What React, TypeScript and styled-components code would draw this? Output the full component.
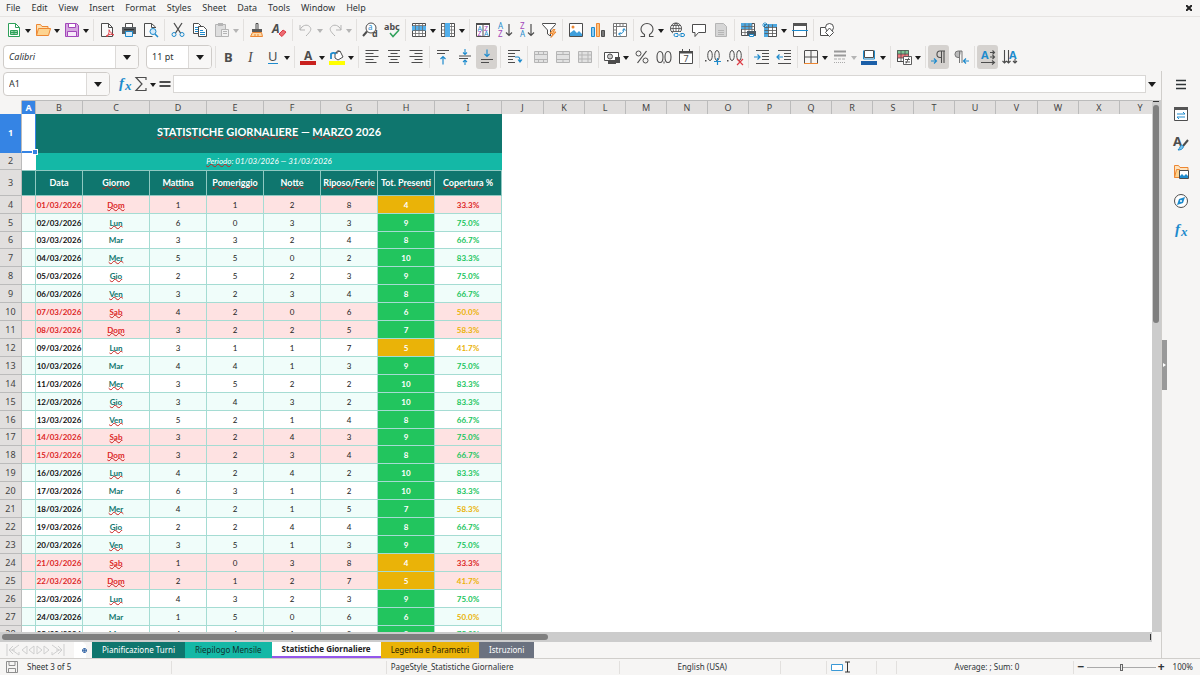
import React from "react";
import styled, { createGlobalStyle, css } from "styled-components";

const ink = "#4d4d4d";
const blue = "#1e8bcd";
const ui = `"Noto Sans", "Open Sans", sans-serif`;
const cellFont = `Lato, "Open Sans", sans-serif`;

const GlobalStyle = createGlobalStyle`
  * { box-sizing: border-box; }
  html, body, #root { height: 100%; }
  body { margin: 0; background: #f6f5f4; color: #2e3436; font: 9px/12px ${ui}; overflow: hidden; }
  button, input { font: inherit; color: inherit; }
  button { border: 0; background: none; padding: 0; }
`;

/* ---------- icons ---------- */

const L = ({ d, c = ink, f = "none", w = 1 }: { d: string; c?: string; f?: string; w?: number }) => (
  <path d={d} stroke={c} fill={f} strokeWidth={w} />
);
const T = ({ x, y, s = 8, c = ink, b, i, serif, children }: {
  x: number; y: number; s?: number; c?: string; b?: boolean; i?: boolean; serif?: boolean; children: string;
}) => (
  <text x={x} y={y} fontSize={s} fill={c} fontWeight={b ? 700 : 400} fontStyle={i ? "italic" : "normal"}
    fontFamily={serif ? "Liberation Serif, serif" : "Noto Sans, sans-serif"}>{children}</text>
);
const grey = "#b5b5b5";
const purple = "#a347ba";
const orange = "#ed8733";

const icons: Record<string, React.ReactNode> = {
  new: <><L d="M2.5 1.5h7l4 4v9h-11z" c="#2fa05a" f="#fff" /><L d="M9.5 1.5v4h4" c="#2fa05a" /><L d="M4.5 8.5h7v4h-7zM4.5 10.5h7M8 8.5v4" c="#2fa05a" f="#9ad7ae" /></>,
  open: <><L d="M1.5 13.5v-11h4l1.5 2h6v2.5" c={orange} f="#fbe0b0" /><L d="M1.5 13.5l2-7h12l-2 7z" c={orange} f="#fdd491" /></>,
  save: <><L d="M1.5 1.5h11l2 2v11h-13z" c={purple} f="#d6a7e0" /><L d="M4.5 1.5h7v4h-7z" c={purple} f="#fff" /><L d="M3.5 9.5h9v5h-9z" c={purple} f="#f6e9f9" /></>,
  pdf: <><L d="M2.5 1.5h7l4 4v9h-11z" f="#fafafa" /><L d="M9.5 1.5v4h4" /><L d="M8 15c2-3 2.5-6 2-7.500M7 14c3-2 6-2 8-1M10 8c1 2 3 4 5 5" c="#e0434b" /></>,
  print: <><L d="M4.5 5v-3.500h7V5" f="#fff" /><path d="M1 5h14v7H1z" fill="#5a5f63" /><L d="M4.5 9.5h7v5h-7z" c={blue} f="#dceefa" /><path d="M3 7h10v1H3z" fill="#2f3234" /></>,
  preview: <><L d="M12.5 6v-1l-4-3.500h-7v13h8" f="#fafafa" /><L d="M8.5 1.5v4h4" /><circle cx="10" cy="9.5" r="3" stroke={blue} fill="#d4eafa" /><L d="M12 12l3 3" c={blue} w={1.5} /></>,
  cut: <><L d="M4 1l6.500 10M12 1L5.500 11" w={1.3} /><circle cx="4" cy="12.5" r="2" stroke={blue} fill="none" /><circle cx="12" cy="12.5" r="2" stroke={blue} fill="none" /></>,
  copy: <><L d="M1.5 1.5h5l3 3v7h-8z" f="#fff" /><L d="M3 5.5h3M3 7.5h3M3 9.5h3" c={blue} /><L d="M6.5 4.5h5l3 3v7h-8z" f="#fff" /><L d="M8 8.5h3M8 10.5h5M8 12.5h5" c={blue} /></>,
  paste: <><L d="M1.5 2.5h10v12h-10z" c={grey} f="#dedede" /><path d="M4 1h5v3H4z" fill={grey} /><L d="M7.5 7.5h7v7h-7zM9 9.5h4M9 11.5h4" c={grey} f="#f2f2f2" /></>,
  clone: <><L d="M7 1.5h2v6H7z" f="#eee" /><path d="M3 7h10v3H3z" fill="#5a5a5a" /><L d="M3.5 10.5h9l1 4h-12zM6 12v2M9 12v2" c={orange} f="#fcd9a8" /></>,
  clear: <><T x={1} y={11} s={12} i b>A</T><L d="M8 12l4-4 3 2-4 4.500z" c="#dd3b45" f="#ec6b72" /></>,
  undo: <L d="M2 3v5h5M2 8c2-5 7-6 9.500-3.500S13 9 8 14" c={grey} />,
  redo: <L d="M14 3v5H9M14 8c-2-5-7-6-9.500-3.500S3 9 8 14" c={grey} />,
  find: <><circle cx="9" cy="6" r="5" stroke={ink} fill="#fff" /><L d="M5 9.5l-4 4.500" w={2} /><T x={6} y={8} s={8} c={blue}>a</T><T x={10} y={15} s={9} b>d</T></>,
  spell: <><T x={0} y={8} s={9} b>abc</T><L d="M6 11l3 3.500 6-6.500" c="#2fa05a" w={1.5} /></>,
  row: <><L d="M1.5 1.5h13v13h-13z" f="#fff" /><path d="M1 4h14v5H1z" fill="#53b0ec" /><L d="M1.5 3.5h13M1.5 8.5h13M1.5 11.5h13M4.5 1.5v13M8 1.5v13M11.5 1.5v13" c="#6a6a6a" w={0.8} /></>,
  col: <><L d="M1.5 1.5h13v13h-13z" f="#fff" /><L d="M1.5 4.5h13M1.5 8h13M1.5 11.5h13M4.5 1.5v13M11.5 1.5v13" c="#6a6a6a" w={0.8} /><path d="M5 1h5v14H5z" fill="#53b0ec" /></>,
  sort: <><L d="M1.5 1.5h13v13h-13zM8 2v13" f="#fff" /><path d="M1 1h14v2H1z" fill={ink} /><T x={2.5} y={8.5} s={7} c={blue}>A</T><T x={2.5} y={14} s={7} c={purple}>Z</T><T x={9} y={8.5} s={7} c={purple}>Z</T><T x={9} y={14} s={7} c={blue}>A</T></>,
  asc: <><T x={1} y={7} s={8} c={blue}>A</T><T x={1} y={15} s={8} c={purple}>Z</T><L d="M12 2v11.500M9 10.5l3 3 3-3" w={1.2} /></>,
  desc: <><T x={1} y={7} s={8} c={purple}>Z</T><T x={1} y={15} s={8} c={blue}>A</T><L d="M12 2v11.500M9 10.5l3 3 3-3" w={1.2} /></>,
  filter: <><L d="M1.5 1.5h13v1L9.5 8v6l-3-2V8l-5-5.500z" f="#fff" /><L d="M12 7.5l-3 4h3l-2 4 5-5.500h-3l2-2.500z" c={orange} f="#fbc27f" /></>,
  image: <><L d="M1.5 1.5h13v13h-13z" f="#fff" /><path d="M2 14v-3l4-3 3 3 2-2 3 3v2z" fill="#3f9fdc" /><circle cx="5" cy="5" r="1.5" fill={orange} /></>,
  chart: <><L d="M1.5 5.5h3v9h-3z" c={blue} f="#8ccbf2" /><L d="M6.5 1.5h3v13h-3z" c={orange} f="#fbc27f" /><L d="M11.5 8.5h3v6h-3z" c={ink} f="#777" /></>,
  pivot: <><L d="M1.5 1.5h13v13h-13zM1.5 4.5h13M4.5 1.5v13M8 1.5v3M11 1.5v3M1.5 8h3M1.5 11h3" f="#fff" c="#777" /><L d="M7 12c3 0 5-2 5-5M10.5 8.5L12 6.5l1.500 2M8.5 10.5L6.5 12l2 1.500" c={blue} /></>,
  omega: <L d="M1.5 14.5h4v-2C3 11 2 9 2 7a6 5.500 0 0 1 12 0c0 2-1 4-3.500 5.500v2h4" w={1.1} />,
  link: <><circle cx="7" cy="6.5" r="5.5" stroke={ink} fill="#fff" /><L d="M1.5 6.5h11M7 1v11M3 3.5h8M3 9.5h8M7 1c-4 3-4 8 0 11M7 1c4 3 4 8 0 11" w={0.8} /><path d="M4 10h12v6H4z" fill="#f6f5f4" /><L d="M9 11.5H6.500a1.500 1.500 0 0 0 0 3H9M11.5 11.5H14a1.500 1.500 0 0 1 0 3h-2.500M8 13h5" c={blue} /></>,
  comment: <L d="M1.5 2.5h13v8h-7l-3.500 4v-4H1.500z" f="#fff" />,
  header: <><L d="M2.5 1.5h8l3 3v10h-11z" c={grey} f="#d6d6d6" /><L d="M5 8.5h6M5 10.5h6M5 12.5h6" c={grey} /></>,
  area: <><L d="M1.5 1.5h13v12h-13z" f="#fff" /><path d="M1 1h11v6H1z" fill="#4ea8e0" /><L d="M1.5 4.5h13M1.5 7.5h13M1.5 10.5h13M5 1.5v12M9 1.5v12M12 1.5v12" c="#666" w={0.8} /><path d="M7 9h9v5H7z" fill="#4a5a66" /><L d="M9.5 12.5h4v2h-4z" c={blue} f="#fff" /></>,
  freeze: <><L d="M2.5 2.5h12v12h-12z" f="#fff" /><path d="M5 2h10v3H5zM2 5h4v10H2z" fill="#4ea8e0" /><L d="M2.5 5.5h12M2.5 8.5h12M2.5 11.5h12M6.5 2.5v12M10.5 2.5v12" c="#555" w={0.8} /><L d="M0 3h5M3 0v5M1 1l4 4M5 1L1 5" c={blue} w={0.8} /></>,
  split: <><L d="M1.5 1.5h13v13h-13z" f="#fff" /><path d="M1 1h14v3H1z" fill="#555" /><L d="M0 8.5h16" c={blue} /></>,
  shapes: <><L d="M1.5 5.5h8v8h-8z" f="#fff" /><circle cx="10.5" cy="5.5" r="4" stroke={ink} fill="#fff" /><L d="M10.5 6l4 4.500-4 4-4-4z" f="#fff" /></>,
  bold: <T x={3} y={13} s={13} b>B</T>,
  italic: <T x={5} y={13} s={14} i serif>I</T>,
  under: <><T x={3} y={12} s={13}>U</T><L d="M3 14.5h10" c={blue} /></>,
  color: <><T x={4} y={11} s={12} b>A</T><path d="M0 12h16v4H0z" fill="#c9211e" /></>,
  fill: <><L d="M6 4l5-2 3 6-5 3-3-2z" f="#fff" /><L d="M8 5c-1-4 2-4 3-2" /><L d="M2 10V5c2-2 4-1 5 0" c={blue} w={1.8} /><path d="M0 12h16v4H0z" fill="#ffff00" /></>,
  left: <L d="M1.5 1.5h13M1.5 4.5h8M1.5 7.5h13M1.5 10.5h8M1.5 13.5h11" w={1.1} />,
  center: <L d="M2 1.5h12M4.5 4.5h7M2 7.5h12M4.5 10.5h7M3 13.5h10" w={1.1} />,
  right: <L d="M1.5 1.5h13M6.5 4.5h8M1.5 7.5h13M6.5 10.5h8M3.5 13.5h11" w={1.1} />,
  top: <><L d="M2 1.5h12M2 4.5h8" w={1.1} /><L d="M8 15.5V7.500M5.5 10L8 7.5l2.500 2.500" c={blue} w={1.2} /></>,
  middle: <><L d="M2 7h12M2 9.5h9" /><L d="M8 0v5.500M6 3.5l2 2 2-2M8 16v-5M6 13l2-2 2 2" c={blue} w={1.1} /></>,
  bottom: <><L d="M2 10.5h12M2 13.5h8" w={1.1} /><L d="M8 .5v7M5.5 5L8 7.5 10.5 5" c={blue} w={1.2} /></>,
  wrap: <><L d="M2 1.5h12M2 4.5h7M2 7.5h7M2 10.5h5M2 13.5h7" /><L d="M9 8h3c2 0 2 2 2 4M12 10.5l2 2.500 2-2.500" c={blue} w={1.2} /></>,
  merge1: <L d="M1.5 2.5h13v11h-13zM1.5 5.5h13M1.5 10.5h13M5.5 2.5v3M10.5 2.5v3M5.5 10.5v3M10.5 10.5v3" c={grey} f="#e2e2e2" />,
  merge2: <L d="M1.5 2.5h13v11h-13zM1.5 5.5h13M1.5 10.5h13M8 2.5v3M8 10.5v3" c={grey} f="#e2e2e2" />,
  merge3: <L d="M1.5 2.5h13v11h-13zM1.5 6h13M1.5 10h13M5 2.5v11M11 2.5v11" c={grey} f="#e2e2e2" />,
  currency: <><L d="M.5 3.5h14v8H.5z" f="#fff" /><circle cx="6" cy="7.5" r="2.5" stroke={ink} fill="#ccc" /><path d="M4 11h8v4H4zM11 8h5v6h-5z" fill={ink} /></>,
  percent: <><circle cx="4.5" cy="4.5" r="2.5" stroke={ink} fill="none" /><circle cx="11.5" cy="11.5" r="2.5" stroke={ink} fill="none" /><L d="M12.5 2l-9 12" w={1.2} /></>,
  number: <><L d="M4 2.5c4 0 4 11 0 11s-4-11 0-11zM12 2.5c4 0 4 11 0 11s-4-11 0-11z" w={1.1} /><path d="M7.5 12.5h1v2h-1z" fill={ink} /></>,
  date: <><L d="M1.5 2.5h13v12h-13zM4.5 0v3M11.5 0v3" f="#fff" /><path d="M1 2h14v2.500H1z" fill={ink} /><T x={5.5} y={13} s={9}>7</T></>,
  addDec: <><L d="M5 1.5c3 0 3 10 0 10s-3-10 0-10zM12 1.5c3 0 3 10 0 10s-3-10 0-10z" /><path d="M0 11h1.500v1.500H0z" fill={ink} /><L d="M12.5 9v7M9 12.5h7" c={blue} w={1.2} /></>,
  delDec: <><L d="M5 1.5c3 0 3 10 0 10s-3-10 0-10zM12 1.5c3 0 3 10 0 10s-3-10 0-10z" /><path d="M0 11h1.500v1.500H0z" fill={ink} /><L d="M10 10l6 6M16 10l-6 6" c="#dd3b45" w={1.2} /></>,
  indent: <><L d="M2 1.5h13M8 4.5h7M8 7.5h7M8 10.5h7M2 14.5h13" /><L d="M0 8h6M3.5 5.5L6 8l-2.500 2.500" c={blue} w={1.2} /></>,
  outdent: <><L d="M2 1.5h13M8 4.5h7M8 7.5h7M8 10.5h7M2 14.5h13" /><L d="M7 8H1M3.5 5.5L1 8l2.500 2.500" c={blue} w={1.2} /></>,
  borders: <><L d="M1.5 2v12M14.5 2v12M1.5 1.5h13M8 2v12M2 8h12" /><L d="M1 14.5h14" c={orange} /></>,
  lines: <><L d="M2 2.5h12M2 6.5h12" c="#999" w={2} /><path d="M2 10h12" stroke="#aaa" strokeDasharray="3 1" /><path d="M2 13.5h12" stroke="#aaa" strokeDasharray="1 1" /></>,
  bcolor: <><L d="M3.5 1.5h9v7h-9z" c={ink} f="#fff" /><L d="M2.5 1.5v8.500h11V1.500" c={blue} /><path d="M0 12h16v4H0z" fill="#1b5fa8" /></>,
  cond: <><L d="M1.5 1.5h11v11h-11z" f="#fff" /><path d="M1 1h12v4H1z" fill="#7cc796" /><path d="M1 5h12v4H1z" fill="#f0787e" /><L d="M1.5 1.5h11v11h-11zM1.5 5h11M1.5 9h6M5 1.5v11M9 1.5v5" w={0.8} /><L d="M7.5 7.5h8v8h-8zM9 10.5h5M9 13h5M13 8.5l-3 6" f="#fff" w={0.9} /></>,
  ltr: <><L d="M14 2h-5a3 3.200 0 0 0 0 6.500h1M10.5 2v12M13 2v12" w={1.1} /><L d="M0 12h5M3 9.5L5.5 12 3 14.5" c={blue} w={1.2} /></>,
  rtl: <><L d="M9 2H5a3 3.200 0 0 0 0 6.500h1" c="#777" f="#bbb" /><L d="M6.5 2v12M9 2v12" c="#777" /><L d="M16 12h-5M13 9.5L10.5 12l2.500 2.500" c={blue} w={1.2} /></>,
  horiz: <><T x={1} y={10} s={11} c={blue} b>A</T><L d="M10 3.5h4M12.5 1.5l2 2-2 2M10 8h4M12.5 6l2 2-2 2M1 13.5h13M12 11.5l2.500 2-2.500 2" w={1.1} /></>,
  vert: <><T x={7} y={10} s={11} c={blue} b>A</T><L d="M2.5 1v13M.5 12l2 2 2-2M6.5 1v13M4.5 12l2 2 2-2M13 10v4M11 12l2 2 2-2" w={1.1} /></>,
  fx: <><T x={2} y={12} s={15} c={blue} i b serif>f</T><T x={8} y={14} s={13} c={blue} i b serif>x</T></>,
  sigma: <L d="M13 4V1.500H3l6 6.500-6 6.500h10V12" w={1.2} />,
  equals: <L d="M2.5 6h11M2.5 10h11" w={2} />,
  menu: <L d="M3 3.5h10M3 7.500h10M3 11.5h10" c="#2e3436" w={1.6} />,
  props: <><L d="M1.5 1.5h13v13h-13z" f="#fff" /><path d="M1 1h14v3H1z" fill="#555" /><L d="M4 8h8M10 6l2 2M12 11H4M6 13l-2-2" c={blue} /></>,
  style: <><T x={0} y={11} s={13} b>A</T><L d="M15 5l-5 6" w={2} /><L d="M5 15c3 0 5-1 5.500-3.500L8.5 10C7 11 7 13 5 15z" c={blue} f="#7cc3ee" /></>,
  gallery: <><L d="M1.5 13.5v-12h4l1.500 2h8v3" c={orange} f="#fde3bf" /><L d="M1.5 13.5l2-8h3v8z" c={orange} f="#fdd491" /><L d="M6.5 6.5h9v8h-9z" f="#fff" /><path d="M7 14v-2l2-2 2 2 2-2 2 2v2z" fill={blue} /></>,
  nav: <><circle cx="8" cy="8" r="6.5" stroke={ink} fill="#fff" /><path d="M12 4l-2 6-6 2 2-6z" fill={blue} /><circle cx="8" cy="8" r="1" fill="#fff" /></>,
  disk: <L d="M2.5 2.5h11v11h-11zM5 2.5v4h6v-4M4.5 13.5v-4h7v4" c="#8f8f8f" />,
  first: <L d="M2 2v12M14 3L7 8l7 5v-3M4 8h6M8 4L4 8l4 4" c="#cfcfcf" />,
  prev: <L d="M7 4L2 8l5 4zM14 4L9 8l5 4z" c="#cfcfcf" />,
  next: <L d="M2 4l5 4-5 4zM9 4l5 4-5 4z" c="#cfcfcf" />,
  last: <L d="M14 2v12M2 3l7 5-7 5v-3M12 8H6M8 4l4 4-4 4" c="#cfcfcf" />,
  add: <><path d="M0 0h9l3 3v13H0z" fill="#fff" /><circle cx="10.5" cy="8.5" r="2" stroke="#3465a4" fill="#fff" /><L d="M8 8.5h5M10.5 6v5" c="#3465a4" w={0.8} /></>,
};

const Svg = styled.svg`
  display: block;
  width: 16px;
  height: 16px;
  flex: none;
  overflow: visible;
`;
const Icon = ({ name }: { name: string }) => (
  <Svg viewBox="0 0 16 16" aria-hidden="true">{icons[name]}</Svg>
);

const Caret = styled.svg<{ $dim?: boolean }>`
  width: 6px;
  height: 4px;
  fill: ${(p) => (p.$dim ? "#b5b5b5" : "#1c1c1c")};
`;
const BigCaret = styled(Caret)`
  width: 8px;
  height: 5px;
`;
const caretPath = <path d="M0 0h6L3 4z" />;

/* ---------- frame ---------- */

const Frame = styled.div`
  display: flex;
  flex-direction: column;
  height: 100vh;
  min-height: 320px;
`;
const MenuBar = styled.nav`
  display: flex;
  align-items: center;
  height: 17px;
  flex: none;
  padding-left: 1px;
  border-bottom: 1px solid #e6e4e2;
`;
const MenuItem = styled.button`
  padding: 0 6px 0 5px;
`;
const Close = styled.button`
  margin-left: auto;
  width: 22px;
  display: grid;
  place-items: center;
`;
const Toolbar = styled.div<{ $h: number }>`
  display: flex;
  align-items: center;
  flex: none;
  height: ${(p) => p.$h}px;
  padding-left: 3px;
`;
const Group = styled.div<{ $tight?: boolean }>`
  display: flex;
  gap: ${(p) => (p.$tight ? 0 : 1)}px;
`;
const Sep = styled.i`
  flex: none;
  width: 6px;
  height: 22px;
  display: flex;
  justify-content: center;
  &::after {
    content: "";
    width: 1px;
    background: #e2e0de;
  }
`;
const Split = styled.div`
  display: flex;
`;
const Tool = styled.button<{ $on?: boolean }>`
  display: grid;
  place-items: center;
  width: 21px;
  height: 24px;
  border-radius: 3px;
  background: ${(p) => (p.$on ? "#d5d2cf" : "transparent")};
`;
const Drop = styled.button`
  display: grid;
  place-items: center;
  width: 8px;
  height: 24px;
  padding-top: 2px;
`;
const Combo = styled.div<{ $w: number }>`
  display: flex;
  flex: none;
  width: ${(p) => p.$w}px;
  height: 24px;
  border: 1px solid #cfccc9;
  border-radius: 4px;
  background: #fff;
  overflow: hidden;
`;
const ComboInput = styled.input<{ $italic?: boolean }>`
  flex: 1;
  min-width: 0;
  border: 0;
  outline: 0;
  padding: 0 5px;
  background: none;
  font-size: 9px;
  font-style: ${(p) => (p.$italic ? "italic" : "normal")};
`;
const ComboButton = styled.button`
  display: grid;
  place-items: center;
  width: 23px;
  border-left: 1px solid #dcdad8;
  background: #f8f7f6;
`;
const Spacer = styled.span`
  flex: none;
  width: 7px;
`;

type ToolGroup = { tight?: boolean; items: [string, string, string?][] };

const Tools = ({ groups }: { groups: ToolGroup[] }) => (
  <>
    {groups.map((g, gi) => (
      <React.Fragment key={gi}>
        {gi > 0 && <Sep />}
        <Group $tight={g.tight}>
          {g.items.map(([name, label, kind]) => (
            <Split key={name}>
              <Tool type="button" aria-label={label} $on={kind === "on"}><Icon name={name} /></Tool>
              {(kind === "drop" || kind === "dim") && (
                <Drop type="button" aria-label={`${label} options`}>
                  <Caret viewBox="0 0 6 4" $dim={kind === "dim"}>{caretPath}</Caret>
                </Drop>
              )}
            </Split>
          ))}
        </Group>
      </React.Fragment>
    ))}
  </>
);

const standard: ToolGroup[] = [
  { tight: true, items: [["new", "New", "drop"], ["open", "Open", "drop"], ["save", "Save", "drop"]] },
  { items: [["pdf", "Export as PDF"], ["print", "Print"], ["preview", "Print preview"]] },
  { items: [["cut", "Cut"], ["copy", "Copy"], ["paste", "Paste", "dim"]] },
  { items: [["clone", "Clone formatting"], ["clear", "Clear formatting"]] },
  { tight: true, items: [["undo", "Undo", "dim"], ["redo", "Redo", "dim"]] },
  { items: [["find", "Find and replace"], ["spell", "Spelling"]] },
  { tight: true, items: [["row", "Row", "drop"], ["col", "Column", "drop"]] },
  { items: [["sort", "Sort"], ["asc", "Sort ascending"], ["desc", "Sort descending"], ["filter", "AutoFilter"]] },
  { items: [["image", "Insert image"], ["chart", "Insert chart"], ["pivot", "Pivot table"]] },
  { items: [["omega", "Special character", "drop"], ["link", "Hyperlink"], ["comment", "Comment"], ["header", "Headers and footers"]] },
  { items: [["area", "Print area"], ["freeze", "Freeze rows and columns", "drop"], ["split", "Split window"]] },
  { items: [["shapes", "Draw functions"]] },
];
const formatting: ToolGroup[] = [
  { items: [["bold", "Bold"], ["italic", "Italic"], ["under", "Underline", "drop"]] },
  { tight: true, items: [["color", "Font color", "drop"], ["fill", "Background color", "drop"]] },
  { items: [["left", "Align left"], ["center", "Center"], ["right", "Align right"]] },
  { items: [["top", "Align top"], ["middle", "Center vertically"], ["bottom", "Align bottom", "on"]] },
  { items: [["wrap", "Wrap text"]] },
  { items: [["merge1", "Merge and center"], ["merge2", "Merge cells"], ["merge3", "Unmerge cells"]] },
  { items: [["currency", "Currency", "drop"], ["percent", "Percent"], ["number", "Number"], ["date", "Date"]] },
  { items: [["addDec", "Add decimal place"], ["delDec", "Delete decimal place"]] },
  { items: [["indent", "Increase indent"], ["outdent", "Decrease indent"]] },
  { tight: true, items: [["borders", "Borders", "drop"], ["lines", "Border style", "dim"], ["bcolor", "Border color", "drop"]] },
  { items: [["cond", "Conditional formatting", "drop"]] },
  { items: [["ltr", "Left to right", "on"], ["rtl", "Right to left"]] },
  { items: [["horiz", "Horizontal text", "on"], ["vert", "Vertical text"]] },
];

const Work = styled.div`
  display: flex;
  flex: 1;
  min-height: 0;
`;
const Main = styled.main`
  flex: 1;
  min-width: 0;
  display: flex;
  flex-direction: column;
`;
const FormulaBar = styled.div`
  display: flex;
  align-items: center;
  flex: none;
  height: 29px;
  padding: 0 3px 3px 3px;
`;
const FormulaTools = styled.div`
  display: flex;
  align-items: center;
  margin-left: 7px;
`;
const SmallTool = styled(Tool)`
  width: 16px;
`;
const Formula = styled.input`
  flex: 1;
  min-width: 0;
  height: 18px;
  border: 1px solid #d9d7d5;
  background: #fff;
  outline: 0;
`;
const Expand = styled.button`
  width: 12px;
  display: grid;
  place-items: center;
`;
const Sidebar = styled.aside`
  flex: none;
  width: 39px;
  display: flex;
  border-left: 1px solid #d0cecb;
`;
const Deck = styled.div`
  flex: 1;
  display: flex;
  flex-direction: column;
  align-items: center;
  gap: 5px;
  padding: 2px 5px 0 0;
`;
const Handle = styled.button`
  align-self: center;
  width: 5px;
  height: 50px;
  background: #999;
  display: grid;
  place-items: center;
`;

/* ---------- sheet ---------- */

const SheetArea = styled.div`
  flex: 1;
  min-height: 0;
  display: flex;
`;
const Pane = styled.div`
  flex: 1;
  min-width: 0;
  background: #fff;
  overflow: hidden;
`;
const VBar = styled.div`
  flex: none;
  width: 9px;
  padding: 1px 2px 0 1px;
  background: #ccc;
  &::before {
    content: "";
    display: block;
    height: 1px;
    margin-bottom: 3px;
    background: #333;
  }
`;
const VThumb = styled.div`
  height: 41%;
  border-radius: 3px;
  background: #7f7f7f;
`;
const HBar = styled.div`
  flex: none;
  display: flex;
  align-items: center;
  justify-content: space-between;
  height: 10px;
  margin-right: 9px;
  padding: 0 1px 0 2px;
  background: #ccc;
  &::after {
    content: "";
    width: 1px;
    height: 6px;
    background: #333;
  }
`;
const HThumb = styled.div`
  width: 47.5%;
  height: 6px;
  border-radius: 3px;
  background: #7f7f7f;
`;
const Table = styled.table`
  table-layout: fixed;
  width: 0;
  border-collapse: separate;
  border-spacing: 0;
  font-family: ${cellFont};
  font-size: 8px;
  line-height: 10px;
  text-align: center;
  td, th { padding: 0; white-space: nowrap; overflow: hidden; }
`;
const Col = styled.col<{ $w: number }>`
  width: ${(p) => p.$w}px;
`;
const ColHead = styled.th<{ $sel?: boolean }>`
  height: 14px;
  font: ${(p) => (p.$sel ? 700 : 400)} 9px/12px ${ui};
  color: ${(p) => (p.$sel ? "#fff" : "#444")};
  background: ${(p) => (p.$sel ? "#3584e4" : "#e1dfde")};
  border-top: 1px solid #bbb;
  border-right: 1px solid #bbb;
`;
const Corner = styled(ColHead)`
  background: #f6f5f4;
  border-top-color: #f6f5f4;
`;
const RowHead = styled.th<{ $sel?: boolean }>`
  font: ${(p) => (p.$sel ? 700 : 400)} 9px/12px ${ui};
  color: ${(p) => (p.$sel ? "#fff" : "#444")};
  background: ${(p) => (p.$sel ? "#3584e4" : "#e1dfde")};
  border-right: 1px solid #bbb;
  border-bottom: 1px solid ${(p) => (p.$sel ? "#3584e4" : "#bbb")};
`;
const Tr = styled.tr<{ $h: number }>`
  height: ${(p) => p.$h}px;
`;
const DayTr = styled.tr`
  height: 18px;
  &:nth-child(11n + 3) { height: 17px; }
`;
const ActiveCell = styled.td`
  position: relative;
  && { overflow: visible; }
  border-right: 1px solid #3584e4;
  border-bottom: 2px solid #3584e4;
  &::after {
    content: "";
    position: absolute;
    right: -2px;
    bottom: -3px;
    width: 4px;
    height: 4px;
    background: #3584e4;
    outline: 1px solid #fff;
  }
`;
const TitleCell = styled.td`
  && { padding-bottom: 3px; }
  background: #0f766e;
  color: #fff;
  font-size: 11px;
  line-height: 14px;
  font-weight: 700;
`;
const PeriodCell = styled.td`
  && { padding-bottom: 2px; }
  background: #14b8a6;
  color: #fff;
  font-style: italic;
`;
const Head = styled.th`
  background: #0f766e;
  color: #fff;
  font-size: 9px;
  font-weight: 700;
  border-right: 1px solid #8fc9c2;
  border-bottom: 1px solid #8fc9c2;
  border-top: 1px solid #8fc9c2;
`;
const Cell = styled.td<{ $bg: string; $fg?: string; $b?: boolean }>`
  background: ${(p) => p.$bg};
  color: ${(p) => p.$fg || "#222"};
  font-weight: ${(p) => (p.$b ? 700 : 400)};
  border-right: 1px solid #a5dcd3;
  border-bottom: 1px solid #a5dcd3;
`;
const Misspelt = styled.span`
  text-decoration: underline wavy #c9211e 1px;
  text-decoration-skip-ink: none;
  text-underline-offset: -1px;
`;

const green = "#22c55e";
const amber = "#eab308";
const red = "#dc2626";
type Day = [string, string, number, number, number, number, number, string];
const days: Day[] = [
  ["01", "Dom", 1, 1, 2, 8, 4, "33.3"], ["02", "Lun", 6, 0, 3, 3, 9, "75.0"],
  ["03", "Mar", 3, 3, 2, 4, 8, "66.7"], ["04", "Mer", 5, 5, 0, 2, 10, "83.3"],
  ["05", "Gio", 2, 5, 2, 3, 9, "75.0"], ["06", "Ven", 3, 2, 3, 4, 8, "66.7"],
  ["07", "Sab", 4, 2, 0, 6, 6, "50.0"], ["08", "Dom", 3, 2, 2, 5, 7, "58.3"],
  ["09", "Lun", 3, 1, 1, 7, 5, "41.7"], ["10", "Mar", 4, 4, 1, 3, 9, "75.0"],
  ["11", "Mer", 3, 5, 2, 2, 10, "83.3"], ["12", "Gio", 3, 4, 3, 2, 10, "83.3"],
  ["13", "Ven", 5, 2, 1, 4, 8, "66.7"], ["14", "Sab", 3, 2, 4, 3, 9, "75.0"],
  ["15", "Dom", 3, 2, 3, 4, 8, "66.7"], ["16", "Lun", 4, 2, 4, 2, 10, "83.3"],
  ["17", "Mar", 6, 3, 1, 2, 10, "83.3"], ["18", "Mer", 4, 2, 1, 5, 7, "58.3"],
  ["19", "Gio", 2, 2, 4, 4, 8, "66.7"], ["20", "Ven", 3, 5, 1, 3, 9, "75.0"],
  ["21", "Sab", 1, 0, 3, 8, 4, "33.3"], ["22", "Dom", 2, 1, 2, 7, 5, "41.7"],
  ["23", "Lun", 4, 3, 2, 3, 9, "75.0"], ["24", "Mar", 1, 5, 0, 6, 6, "50.0"],
  ["25", "Mer", 4, 4, 1, 3, 9, "75.0"],
];
const heads: [string, string, string?][] = [
  ["Data", ""], ["", "Giorno"], ["", "Mattina"], ["", "Pomeriggio"], ["", "Notte"],
  ["", "Riposo/Ferie"], ["Tot. ", "Presenti"], ["", "Copertura", " %"],
];
const letters = "ABCDEFGHIJKLMNOPQRSTUVWXY".split("");
const widths = [14, 47, 67, 57, 57, 57, 57, 57, 67];
const colWidth = (i: number) => (i < widths.length ? widths[i] : i % 6 === 3 ? 42 : 41);

const Sheet = () => (
  <Table>
    <colgroup>
      <Col $w={22} />
      {letters.map((l, i) => <Col key={l} $w={colWidth(i)} />)}
    </colgroup>
    <thead>
      <tr>
        <Corner aria-label="Select all" />
        {letters.map((l) => <ColHead key={l} scope="col" $sel={l === "A"}>{l}</ColHead>)}
      </tr>
    </thead>
    <tbody>
      <Tr $h={39}>
        <RowHead scope="row" $sel>1</RowHead>
        <ActiveCell />
        <TitleCell colSpan={8}>
          <Misspelt>STATISTICHE</Misspelt> <Misspelt>GIORNALIERE</Misspelt> — <Misspelt>MARZO</Misspelt> 2026
        </TitleCell>
      </Tr>
      <Tr $h={17}>
        <RowHead scope="row">2</RowHead>
        <td />
        <PeriodCell colSpan={8}><Misspelt>Periodo</Misspelt>: 01/03/2026 — 31/03/2026</PeriodCell>
      </Tr>
      <Tr $h={26}>
        <RowHead scope="row">3</RowHead>
        <Head as="td" />
        {heads.map(([pre, word, post]) => (
          <Head key={pre + word} scope="col">{pre}{word && <Misspelt>{word}</Misspelt>}{post}</Head>
        ))}
      </Tr>
    </tbody>
    <tbody>
      {days.map(([d, name, m, p, n, r, tot, pct], i) => {
        const weekend = name === "Sab" || name === "Dom";
        const bg = weekend ? "#fee2e2" : i % 2 ? "#f0fdfa" : "#fff";
        const v = parseFloat(pct);
        return (
          <DayTr key={d}>
            <RowHead scope="row">{i + 4}</RowHead>
            <Cell $bg={bg} />
            <Cell $bg={bg} $b $fg={weekend ? red : "#111"}>{d}/03/2026</Cell>
            <Cell $bg={bg} $b $fg={weekend ? red : "#0f766e"}>{name === "Mar" ? name : <Misspelt>{name}</Misspelt>}</Cell>
            <Cell $bg={bg}>{m}</Cell>
            <Cell $bg={bg}>{p}</Cell>
            <Cell $bg={bg}>{n}</Cell>
            <Cell $bg={bg}>{r}</Cell>
            <Cell $bg={tot > 5 ? green : amber} $fg="#fff" $b>{tot}</Cell>
            <Cell $bg={bg} $b $fg={v < 40 ? red : v < 60 ? amber : green}>{pct}%</Cell>
          </DayTr>
        );
      })}
    </tbody>
  </Table>
);

/* ---------- bottom ---------- */

const TabBar = styled.div`
  flex: none;
  display: flex;
  height: 16px;
  padding-left: 5px;
`;
const TabNav = styled.div`
  display: flex;
  width: 69px;
  align-items: center;
`;
const NavButton = styled.button`
  width: 15px;
`;
const AddButton = styled.button`
  width: 18px;
  overflow: hidden;
`;
const Tab = styled.button<{ $bg: string; $fg: string; $on?: boolean }>`
  padding: 0 10px;
  font-size: 8px;
  line-height: 14px;
  background: ${(p) => p.$bg};
  color: ${(p) => p.$fg};
  ${(p) => p.$on && css`
    font-weight: 700;
    border-bottom: 2px solid #9457eb;
  `}
`;
const StatusBar = styled.footer`
  flex: none;
  display: flex;
  align-items: center;
  height: 17px;
  border-top: 1px solid #d0cecb;
  font-size: 8px;
`;
const Field = styled.div<{ $w: number; $grow?: boolean; $center?: boolean }>`
  flex: ${(p) => `${p.$grow ? p.$w : 0} 0 ${p.$w}px`};
  display: flex;
  align-items: center;
  justify-content: ${(p) => (p.$center ? "center" : "flex-start")};
  gap: 7px;
  height: 13px;
  padding-left: 4px;
  white-space: nowrap;
  border-right: 1px solid #e2e0de;
`;
const Zoom = styled.div`
  display: flex;
  align-items: center;
  gap: 2px;
  width: 91px;
  font: 700 12px/12px ${ui};
  padding-left: 4px;
`;
const Range = styled.input`
  appearance: none;
  flex: 1;
  min-width: 0;
  height: 10px;
  margin: 0;
  background: linear-gradient(#aaa, #aaa) center / 100% 1px no-repeat;
  &::-webkit-slider-thumb {
    appearance: none;
    width: 3px;
    height: 7px;
    border: 1px solid #666;
    background: #eee;
  }
`;
const Percent = styled.span`
  padding: 0 7px 0 8px;
`;

const menus = ["File", "Edit", "View", "Insert", "Format", "Styles", "Sheet", "Data", "Tools", "Window", "Help"];
const tabs: [string, string, string, boolean?][] = [
  ["Pianificazione Turni", "#0f766e", "#fff"],
  ["Riepilogo Mensile", "#14b8a6", "#10302c"],
  ["Statistiche Giornaliere", "#fff", "#222", true],
  ["Legenda e Parametri", "#eab308", "#2b2100"],
  ["Istruzioni", "#6b7280", "#fff"],
];

const ComboBox = ({ w, label, value, italic }: { w: number; label: string; value: string; italic?: boolean }) => (
  <Combo $w={w}>
    <ComboInput aria-label={label} defaultValue={value} $italic={italic} />
    <ComboButton type="button" aria-label={`${label} list`}>
      <BigCaret viewBox="0 0 6 4" preserveAspectRatio="none">{caretPath}</BigCaret>
    </ComboButton>
  </Combo>
);

export default function App() {
  return (
    <Frame>
      <GlobalStyle />
      <MenuBar aria-label="Menu">
        {menus.map((m) => <MenuItem type="button" key={m}>{m}</MenuItem>)}
        <Close type="button" aria-label="Close">
          <svg width="6" height="6" viewBox="0 0 6 6" aria-hidden="true"><path d="M0 0l6 6M6 0L0 6" stroke="#222" strokeWidth="2" /></svg>
        </Close>
      </MenuBar>
      <Toolbar $h={26}><Tools groups={standard} /></Toolbar>
      <Toolbar $h={28}>
        <ComboBox w={136} label="Font name" value="Calibri" italic />
        <Spacer />
        <ComboBox w={66} label="Font size" value="11 pt" />
        <Sep />
        <Tools groups={formatting} />
      </Toolbar>
      <Work>
        <Main>
          <FormulaBar>
            <ComboBox w={107} label="Name box" value="A1" />
            <FormulaTools>
              <SmallTool type="button" aria-label="Function wizard"><Icon name="fx" /></SmallTool>
              <SmallTool type="button" aria-label="Sum"><Icon name="sigma" /></SmallTool>
              <Drop type="button" aria-label="Sum options"><Caret viewBox="0 0 6 4">{caretPath}</Caret></Drop>
              <SmallTool type="button" aria-label="Formula"><Icon name="equals" /></SmallTool>
            </FormulaTools>
            <Formula aria-label="Input line" />
            <Expand type="button" aria-label="Expand input line">
              <BigCaret viewBox="0 0 6 4" preserveAspectRatio="none">{caretPath}</BigCaret>
            </Expand>
          </FormulaBar>
          <SheetArea>
            <Pane><Sheet /></Pane>
            <VBar><VThumb /></VBar>
          </SheetArea>
          <HBar><HThumb /></HBar>
          <TabBar>
            <TabNav>
              {["first", "prev", "next", "last"].map((n) => (
                <NavButton type="button" key={n} aria-label={`${n} sheet`}><Icon name={n} /></NavButton>
              ))}
            </TabNav>
            <AddButton type="button" aria-label="Add sheet"><Icon name="add" /></AddButton>
            {tabs.map(([name, bg, fg, on]) => <Tab type="button" key={name} $bg={bg} $fg={fg} $on={on}>{name}</Tab>)}
          </TabBar>
        </Main>
        <Sidebar>
          <Handle type="button" aria-label="Hide sidebar">
            <svg width="3" height="4" viewBox="0 0 3 4" aria-hidden="true"><path d="M0 0l3 2-3 2z" fill="#fff" /></svg>
          </Handle>
          <Deck>
            {[["menu", "Sidebar settings"], ["props", "Properties"], ["style", "Styles"], ["gallery", "Gallery"], ["nav", "Navigator"], ["fx", "Functions"]].map(([n, l]) => (
              <Tool type="button" key={n} aria-label={l}><Icon name={n} /></Tool>
            ))}
          </Deck>
        </Sidebar>
      </Work>
      <StatusBar>
        <Field $w={172} $grow><Icon name="disk" />Sheet 3 of 5</Field>
        <Field $w={214} $grow />
        <Field $w={233} $grow>PageStyle_Statistiche Giornaliere</Field>
        <Field $w={161} $grow $center>English (USA)</Field>
        <Field $w={46} />
        <Field $w={50}>
          <svg width="19" height="12" viewBox="0 0 19 12" aria-hidden="true">
            <path d="M.5 3.5h11v6H.5z" stroke="#3b99d6" fill="#fff" />
            <path d="M14 1h5M16.5 1v10M14 11h5" stroke="#333" fill="none" />
          </svg>
        </Field>
        <Field $w={20} />
        <Field $w={176} $grow $center>Average: ; Sum: 0</Field>
        <Zoom>
          <button type="button" aria-label="Zoom out">−</button>
          <Range type="range" aria-label="Zoom" defaultValue={50} />
          <button type="button" aria-label="Zoom in">+</button>
        </Zoom>
        <Percent>100%</Percent>
      </StatusBar>
    </Frame>
  );
}
